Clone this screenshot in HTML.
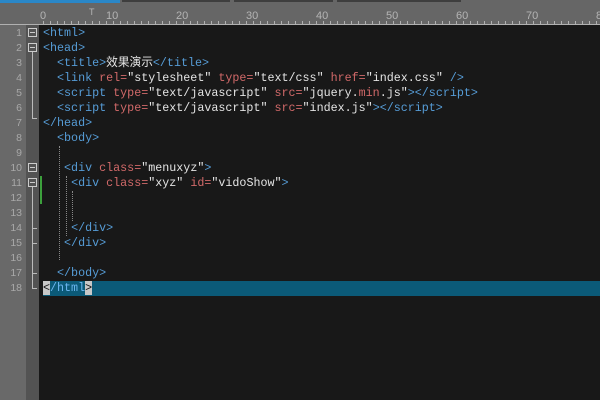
<!DOCTYPE html><html><head><meta charset="utf-8"><style>
body{margin:0;width:600px;height:400px;overflow:hidden;background:#181818;position:relative;font-family:"Liberation Mono","Noto Sans CJK SC",monospace}
.top{position:absolute;left:0;top:0;width:600px;height:3px;background:#666}
.ruler{position:absolute;left:0;top:3px;width:600px;height:21px;background:#666;border-bottom:1px solid #b0b0b0}
.rl{position:absolute;top:7px;font-size:11px;color:#b4b4b4;font-family:"Liberation Sans",sans-serif}
.gut{position:absolute;left:0;top:25px;width:26px;height:375px;background:#696969}
.fold{position:absolute;left:26px;top:25px;width:13px;height:375px;background:#535353}
.ln{position:absolute;left:0;width:22px;text-align:right;font-size:10.5px;color:#a8a8a8;font-family:"Liberation Sans",sans-serif}
.l{position:absolute;left:43px;font-size:11.7px;color:#e4e4e4;white-space:pre;line-height:15px}
.t{color:#569cd6}.a{color:#d16969}
.box{position:absolute;left:28px;width:7px;height:7px;border:1px solid #ccc;}
.box:after{content:"";position:absolute;left:1px;top:3px;width:5px;height:1px;background:#ccc}
.vl{position:absolute;width:1px;background:#bbb}
.dot{position:absolute;width:0;border-left:1px dotted #888}
</style></head><body>
<div class="top"></div>
<div style="position:absolute;left:0;top:0;width:120px;height:3px;background:#2a87c8"></div>
<div style="position:absolute;left:122px;top:0;width:108px;height:2px;background:#3e3e3e"></div>
<div style="position:absolute;left:234px;top:0;width:99px;height:2px;background:#3e3e3e"></div>
<div style="position:absolute;left:337px;top:0;width:124px;height:2px;background:#3e3e3e"></div>
<div class="ruler">
<span class="rl" style="left:40px">0</span><span class="rl" style="left:89px;top:4px;font-size:9px">T</span><span class="rl" style="left:106px">10</span><span class="rl" style="left:176px">20</span><span class="rl" style="left:246px">30</span><span class="rl" style="left:316px">40</span><span class="rl" style="left:386px">50</span><span class="rl" style="left:456px">60</span><span class="rl" style="left:526px">70</span><span class="rl" style="left:596px">80</span>
<div style="position:absolute;left:43px;right:0;bottom:0;height:3px;background:repeating-linear-gradient(90deg,#b0b0b0 0 1px,transparent 1px 7px)"></div>
</div>
<div class="gut"></div><div class="fold"></div>
<div style="position:absolute;left:43px;top:281px;width:557px;height:15px;background:#0b5a78"></div>
<div class="ln" style="top:27px">1</div><div class="ln" style="top:42px">2</div><div class="ln" style="top:57px">3</div><div class="ln" style="top:72px">4</div><div class="ln" style="top:87px">5</div><div class="ln" style="top:102px">6</div><div class="ln" style="top:117px">7</div><div class="ln" style="top:132px">8</div><div class="ln" style="top:147px">9</div><div class="ln" style="top:162px">10</div><div class="ln" style="top:177px">11</div><div class="ln" style="top:192px">12</div><div class="ln" style="top:207px">13</div><div class="ln" style="top:222px">14</div><div class="ln" style="top:237px">15</div><div class="ln" style="top:252px">16</div><div class="ln" style="top:267px">17</div><div class="ln" style="top:282px">18</div>
<div class="box" style="top:28px"></div><div class="box" style="top:43px"></div><div class="box" style="top:163px"></div><div class="box" style="top:178px"></div>
<div class="vl" style="left:32px;top:52px;height:66px"></div><div class="vl" style="left:32px;top:118px;width:5px;height:1px"></div>
<div class="vl" style="left:32px;top:187px;height:102px"></div>
<div class="vl" style="left:32px;top:228px;width:5px;height:1px"></div><div class="vl" style="left:32px;top:243px;width:5px;height:1px"></div><div class="vl" style="left:32px;top:273px;width:5px;height:1px"></div><div class="vl" style="left:32px;top:288px;width:5px;height:1px"></div>
<div style="position:absolute;left:40px;top:176px;width:2px;height:28px;background:#3ca03c"></div>
<div class="dot" style="left:59px;top:146px;height:114px"></div>
<div class="dot" style="left:66px;top:176px;height:60px"></div>
<div class="dot" style="left:72px;top:191px;height:30px"></div>
<div class="l" style="top:26px"><span class="t">&lt;html&gt;</span></div>
<div class="l" style="top:41px"><span class="t">&lt;head&gt;</span></div>
<div class="l" style="top:56px">  <span class="t">&lt;title&gt;</span>效果演示<span class="t">&lt;/title&gt;</span></div>
<div class="l" style="top:71px">  <span class="t">&lt;link</span> <span class="a">rel=</span>"stylesheet" <span class="a">type=</span>"text/css" <span class="a">href=</span>"index.css" <span class="t">/&gt;</span></div>
<div class="l" style="top:86px">  <span class="t">&lt;script</span> <span class="a">type=</span>"text/javascript" <span class="a">src=</span>"jquery.<span class="a">min</span>.js"<span class="t">&gt;&lt;/script&gt;</span></div>
<div class="l" style="top:101px">  <span class="t">&lt;script</span> <span class="a">type=</span>"text/javascript" <span class="a">src=</span>"index.js"<span class="t">&gt;&lt;/script&gt;</span></div>
<div class="l" style="top:116px"><span class="t">&lt;/head&gt;</span></div>
<div class="l" style="top:131px">  <span class="t">&lt;body&gt;</span></div>
<div class="l" style="top:161px">   <span class="t">&lt;div</span> <span class="a">class=</span>"menuxyz"<span class="t">&gt;</span></div>
<div class="l" style="top:176px">    <span class="t">&lt;div</span> <span class="a">class=</span>"xyz" <span class="a">id=</span>"vidoShow"<span class="t">&gt;</span></div>
<div class="l" style="top:221px">    <span class="t">&lt;/div&gt;</span></div>
<div class="l" style="top:236px">   <span class="t">&lt;/div&gt;</span></div>
<div class="l" style="top:266px">  <span class="t">&lt;/body&gt;</span></div>
<div class="l" style="top:281px"><span style="background:#c8c8c8;color:#111">&lt;</span><span class="t" style="color:#6cb6f0">/html</span><span style="background:#c8c8c8;color:#111">&gt;</span></div>
</body></html>
